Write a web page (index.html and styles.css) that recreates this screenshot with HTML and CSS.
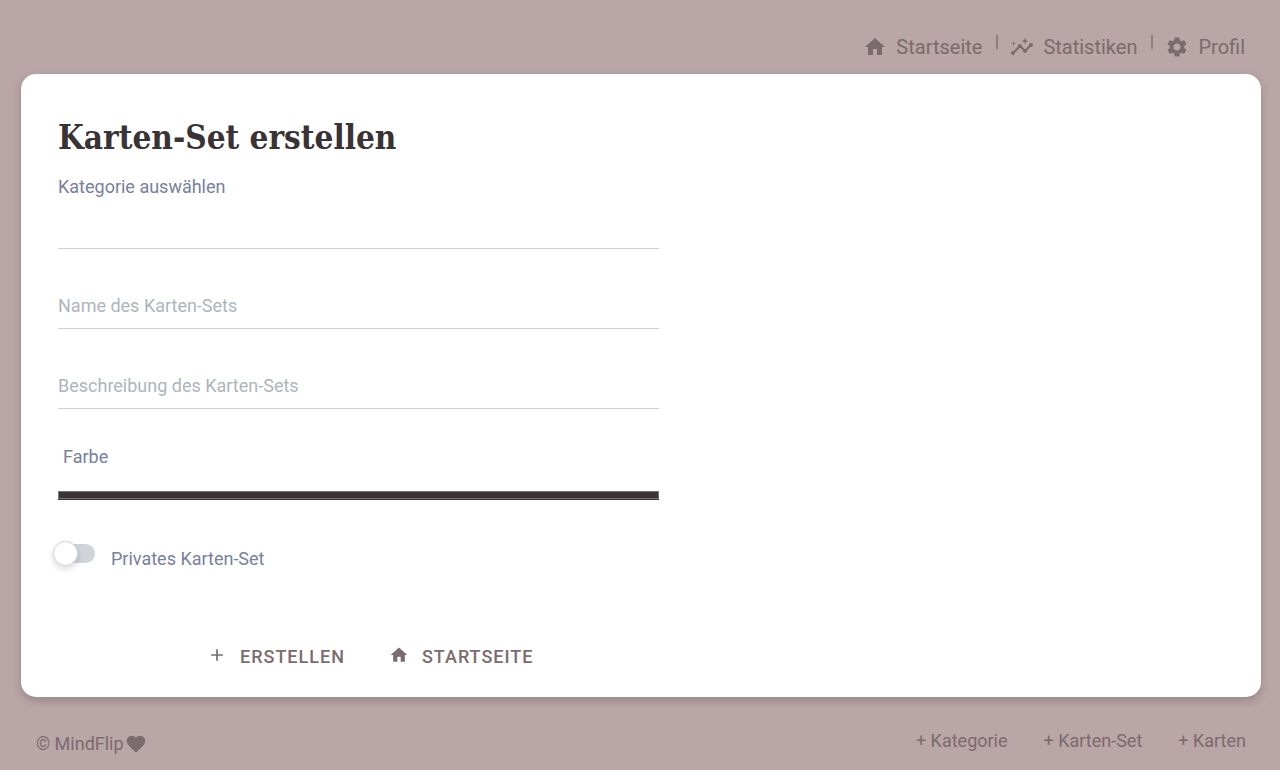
FILE: index.html
```html
<!DOCTYPE html>
<html lang="de">
<head>
    <meta charset="utf-8">
    <meta name="viewport" content="width=device-width, initial-scale=1">
    <title>MindFlip - Karten-Set erstellen</title>
    <link rel="stylesheet" href="styles.css">
</head>
<body>
    <header>
        <nav class="topnav">
            <a href="#">
                <svg class="icon" viewBox="0 0 24 24"><path d="M10 20v-6h4v6h5v-8h3L12 3 2 12h3v8z"/></svg>
                Startseite
            </a>
            <span class="divider"></span>
            <a href="#">
                <svg class="icon" viewBox="0 0 24 24"><path d="M21 8c-1.45 0-2.26 1.44-1.93 2.51l-3.55 3.56c-.3-.09-.74-.09-1.04 0l-2.55-2.55C12.27 10.45 11.46 9 10 9c-1.45 0-2.27 1.44-1.93 2.52l-4.56 4.55C2.44 15.74 1 16.55 1 18c0 1.1.9 2 2 2 1.45 0 2.26-1.44 1.93-2.51l4.55-4.56c.3.09.74.09 1.04 0l2.55 2.55C12.73 16.55 13.54 18 15 18c1.45 0 2.27-1.44 1.93-2.52l3.56-3.55C21.56 12.26 23 11.45 23 10c0-1.1-.9-2-2-2z"/><path d="M15 9l.94-2.07L18 6l-2.06-.93L15 3l-.92 2.07L12 6l2.08.93zM3.5 11L4 9l2-.5L4 8l-.5-2L3 8l-2 .5L3 9z"/></svg>
                Statistiken
            </a>
            <span class="divider"></span>
            <a href="#">
                <svg class="icon" viewBox="0 0 24 24"><path d="M19.14 12.94c.04-.3.06-.61.06-.94 0-.32-.02-.64-.07-.94l2.03-1.58c.18-.14.23-.41.12-.61l-1.92-3.32c-.12-.22-.37-.29-.59-.22l-2.39.96c-.5-.38-1.03-.7-1.62-.94l-.36-2.54c-.04-.24-.24-.41-.48-.41h-3.84c-.24 0-.43.17-.47.41l-.36 2.54c-.59.24-1.13.57-1.62.94l-2.39-.96c-.22-.08-.47 0-.59.22L2.74 8.87c-.12.21-.08.47.12.61l2.03 1.58c-.05.3-.09.63-.09.94s.02.64.07.94l-2.03 1.58c-.18.14-.23.41-.12.61l1.92 3.32c.12.22.37.29.59.22l2.39-.96c.5.38 1.03.7 1.62.94l.36 2.54c.05.24.24.41.48.41h3.84c.24 0 .44-.17.47-.41l.36-2.54c.59-.24 1.13-.56 1.62-.94l2.39.96c.22.08.47 0 .59-.22l1.92-3.32c.12-.22.07-.47-.12-.61l-2.01-1.58zM12 15.6c-1.98 0-3.6-1.62-3.6-3.6s1.62-3.6 3.6-3.6 3.6 1.62 3.6 3.6-1.62 3.6-3.6 3.6z"/></svg>
                Profil
            </a>
        </nav>
    </header>

    <main class="card">
        <form class="set-form">
            <h1>Karten-Set erstellen</h1>

            <label for="category">Kategorie auswählen</label>
            <select id="category" class="field"></select>

            <input type="text" class="field" id="name" placeholder="Name des Karten-Sets" aria-label="Name des Karten-Sets">
            <input type="text" class="field" id="description" placeholder="Beschreibung des Karten-Sets" aria-label="Beschreibung des Karten-Sets">

            <label for="color" class="color-label">Farbe</label>
            <input type="color" class="color" id="color" value="#3a3335">

            <div class="switch-row">
                <input type="checkbox" class="switch" id="private">
                <label for="private">Privates Karten-Set</label>
            </div>

            <div class="buttons">
                <button type="button">
                    <svg class="icon-small" viewBox="0 0 24 24"><path d="M19 13h-6v6h-2v-6H5v-2h6V5h2v6h6z"/></svg>
                    Erstellen
                </button>
                <button type="button">
                    <svg class="icon-small" viewBox="0 0 24 24"><path d="M10 20v-6h4v6h5v-8h3L12 3 2 12h3v8z"/></svg>
                    Startseite
                </button>
            </div>
        </form>
    </main>

    <footer>
        <div class="copyright">
            © MindFlip
            <svg class="heart" viewBox="0 0 24 24"><path d="M12 21.35l-1.45-1.32C5.4 15.36 2 12.28 2 8.5 2 5.42 4.42 3 7.5 3c1.74 0 3.41.81 4.5 2.09C13.09 3.81 14.76 3 16.5 3 19.58 3 22 5.42 22 8.5c0 3.78-3.4 6.86-8.55 11.54z"/></svg>
        </div>
        <nav class="footnav">
            <a href="#">+ Kategorie</a>
            <a href="#">+ Karten-Set</a>
            <a href="#">+ Karten</a>
        </nav>
    </footer>
</body>
</html>
```
FILE: styles.css
```css
* {
    box-sizing: border-box;
}

body {
    margin: 0;
    background-color: #baa5a7;
    color: #7b6b6e;
    font-family: Roboto, sans-serif;
    font-size: 18px;
    line-height: 24px;
}

a {
    color: inherit;
    text-decoration: none;
}

svg {
    fill: currentColor;
    flex: none;
}

.icon {
    width: 24px;
    height: 24px;
}

/* header */

.topnav {
    display: flex;
    justify-content: flex-end;
    padding: 35px 35px 15px;
    font-size: 20px;
}

.topnav a {
    display: flex;
    align-items: center;
    gap: 9px;
}

.divider {
    width: 2px;
    height: 14px;
    margin: 0 12px 0 14px;
    background-color: #8f7d80;
}

/* card with the form */

.card {
    margin: 0 19px 0 21px;
    padding: 39px 0 16px 37px;
    background-color: #fff;
    border-radius: 15px;
    box-shadow: 0 4px 8px rgba(58, 51, 53, 0.25);
}

.set-form {
    display: flex;
    flex-direction: column;
    width: calc(50% - 1px);
    color: #7880a0;
}

h1 {
    margin: 0 0 12px;
    color: #3a3335;
    font-family: "Roboto Slab", "DejaVu Serif Condensed", "DejaVu Serif", serif;
    font-size: 33px;
    font-weight: bold;
    line-height: 50px;
}

.field {
    width: 100%;
    height: 46px;
    margin-bottom: 34px;
    padding: 0;
    border: 0;
    border-bottom: 1px solid #d1d1d1;
    border-radius: 0;
    background-color: transparent;
    color: #3a3335;
    font: inherit;
    appearance: none;
    outline: none;
}

select.field {
    height: 50px;
}

.field::placeholder {
    color: #adb5bd;
}

.color-label {
    margin: 2px 0 22px 5px;
}

.color {
    width: 100%;
    height: 9px;
    padding: 0;
    border: 0;
    border-bottom: 1px solid #3a3335;
    background-color: #3a3335;
    appearance: none;
}

.color::-webkit-color-swatch-wrapper {
    padding: 0;
}

.color::-webkit-color-swatch {
    border: 1px solid #777;
    border-radius: 0;
}

.switch-row {
    display: flex;
    gap: 16px;
    margin-top: 44px;
}

.switch-row label {
    margin-top: 3px;
}

.switch {
    position: relative;
    width: 37px;
    height: 19px;
    margin: 0;
    border-radius: 10px;
    background-color: #ced4da;
    appearance: none;
}

.switch::before {
    content: "";
    position: absolute;
    top: -3px;
    left: -5px;
    width: 23px;
    height: 23px;
    border: 1px solid #ced4da;
    border-radius: 50%;
    background-color: #fff;
    box-shadow: 0 3px 6px rgba(0, 0, 0, 0.15);
}

.switch:checked {
    background-color: #7b6b6e;
}

.switch:checked::before {
    left: 17px;
}

.buttons {
    display: flex;
    justify-content: center;
    gap: 12px;
    margin-top: 62px;
    padding-left: 24px;
}

button {
    display: flex;
    align-items: center;
    gap: 13px;
    padding: 12px 16px;
    border: 0;
    background-color: transparent;
    color: #7b6b6e;
    font: 500 18px/24px Roboto, sans-serif;
    letter-spacing: 1px;
    text-transform: uppercase;
}

.icon-small {
    width: 20px;
    height: 20px;
    margin-bottom: 4px;
}

/* footer */

footer {
    display: flex;
    justify-content: space-between;
    padding: 32px 34px 14px 36px;
}

.copyright {
    display: flex;
    align-items: center;
    gap: 1px;
    margin-top: 3px;
}

.heart {
    width: 22px;
    height: 22px;
}

.footnav {
    display: flex;
    gap: 36px;
}
```
